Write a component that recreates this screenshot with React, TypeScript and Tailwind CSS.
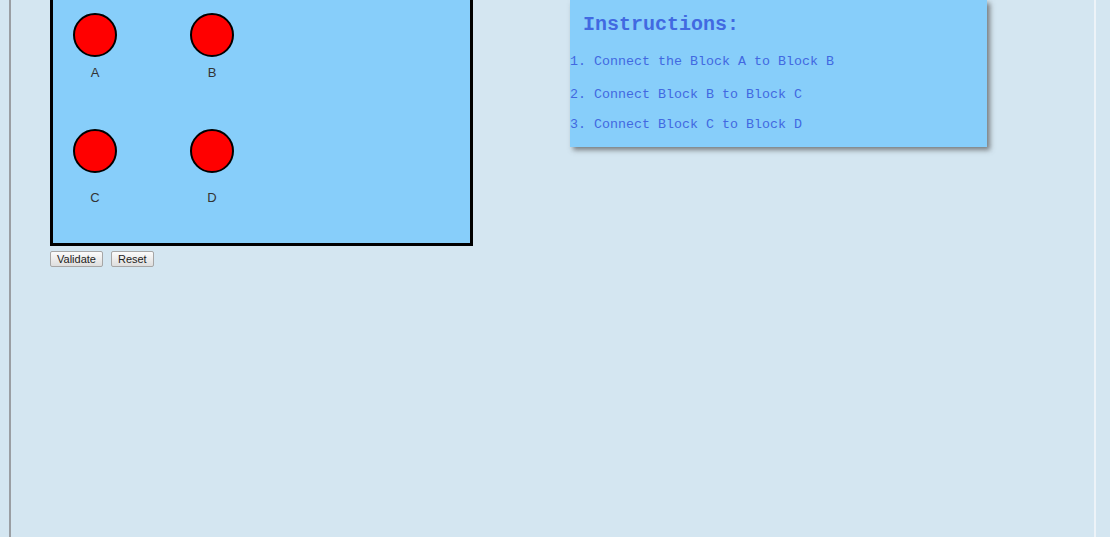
import React from "react";

const nodes = [
  { id: "A", x: 20, y: 30 },
  { id: "B", x: 137, y: 30 },
  { id: "C", x: 20, y: 146 },
  { id: "D", x: 137, y: 146 },
];

const steps = [
  "Connect the Block A to Block B",
  "Connect Block B to Block C",
  "Connect Block C to Block D",
];

export default function App() {
  return (
    <div className="flex h-[537px] w-[1110px] overflow-hidden bg-[#d4e6f1] font-['Liberation_Sans',Arial,sans-serif]">
      {/* left rule */}
      <div className="w-[9px] flex-shrink-0" />
      <div className="w-[2px] flex-shrink-0 bg-[#9a9ea3]" />

      <div className="flex flex-1 items-start">
        {/* Canvas + buttons */}
        <div className="ml-[39px] flex flex-col">
          <div className="relative mt-[-20px] h-[266px] w-[423px] border-[3px] border-black bg-[#87cefa]">
            {nodes.map((n) => (
              <div
                key={n.id}
                className="absolute flex w-[44px] flex-col items-center"
                style={{ left: n.x, top: n.y }}
              >
                <div className="h-[44px] w-[44px] rounded-full border-2 border-black bg-[#ff0000]" />
                <span
                  className={`text-[13px] leading-none text-[#333] ${
                    n.id === "A" || n.id === "B" ? "mt-[9px]" : "mt-[18px]"
                  }`}
                >
                  {n.id}
                </span>
              </div>
            ))}
          </div>
          <div className="mt-[5px] flex gap-[8px]">
            <button className="h-[16px] rounded-[2px] border border-[#a6a6a6] bg-gradient-to-b from-[#fbfbfb] to-[#dedede] px-[6px] text-[11px] leading-none text-[#222]">
              Validate
            </button>
            <button className="h-[16px] rounded-[2px] border border-[#a6a6a6] bg-gradient-to-b from-[#fbfbfb] to-[#dedede] px-[6px] text-[11px] leading-none text-[#222]">
              Reset
            </button>
          </div>
        </div>

        {/* Instructions */}
        <div className="ml-[97px] h-[147px] w-[417px] bg-[#87cefa] font-['Liberation_Mono','Courier_New',monospace] text-[#4169e1] shadow-[3px_3px_5px_rgba(80,80,80,0.7)]">
          <h2 className="mt-[14px] pl-[13px] text-[20px] font-bold leading-[22px]">
            Instructions:
          </h2>
          <div className="mt-[18px] text-[13.33px] leading-[16px]">
            {steps.map((s, i) => (
              <p key={s} className={i === 0 ? "" : i === 1 ? "mt-[17px]" : "mt-[14px]"}>
                {i + 1}. {s}
              </p>
            ))}
          </div>
        </div>
      </div>

      {/* right rule */}
      <div className="mr-[14px] w-[2px] flex-shrink-0 bg-[#edf3f8]" />
    </div>
  );
}
